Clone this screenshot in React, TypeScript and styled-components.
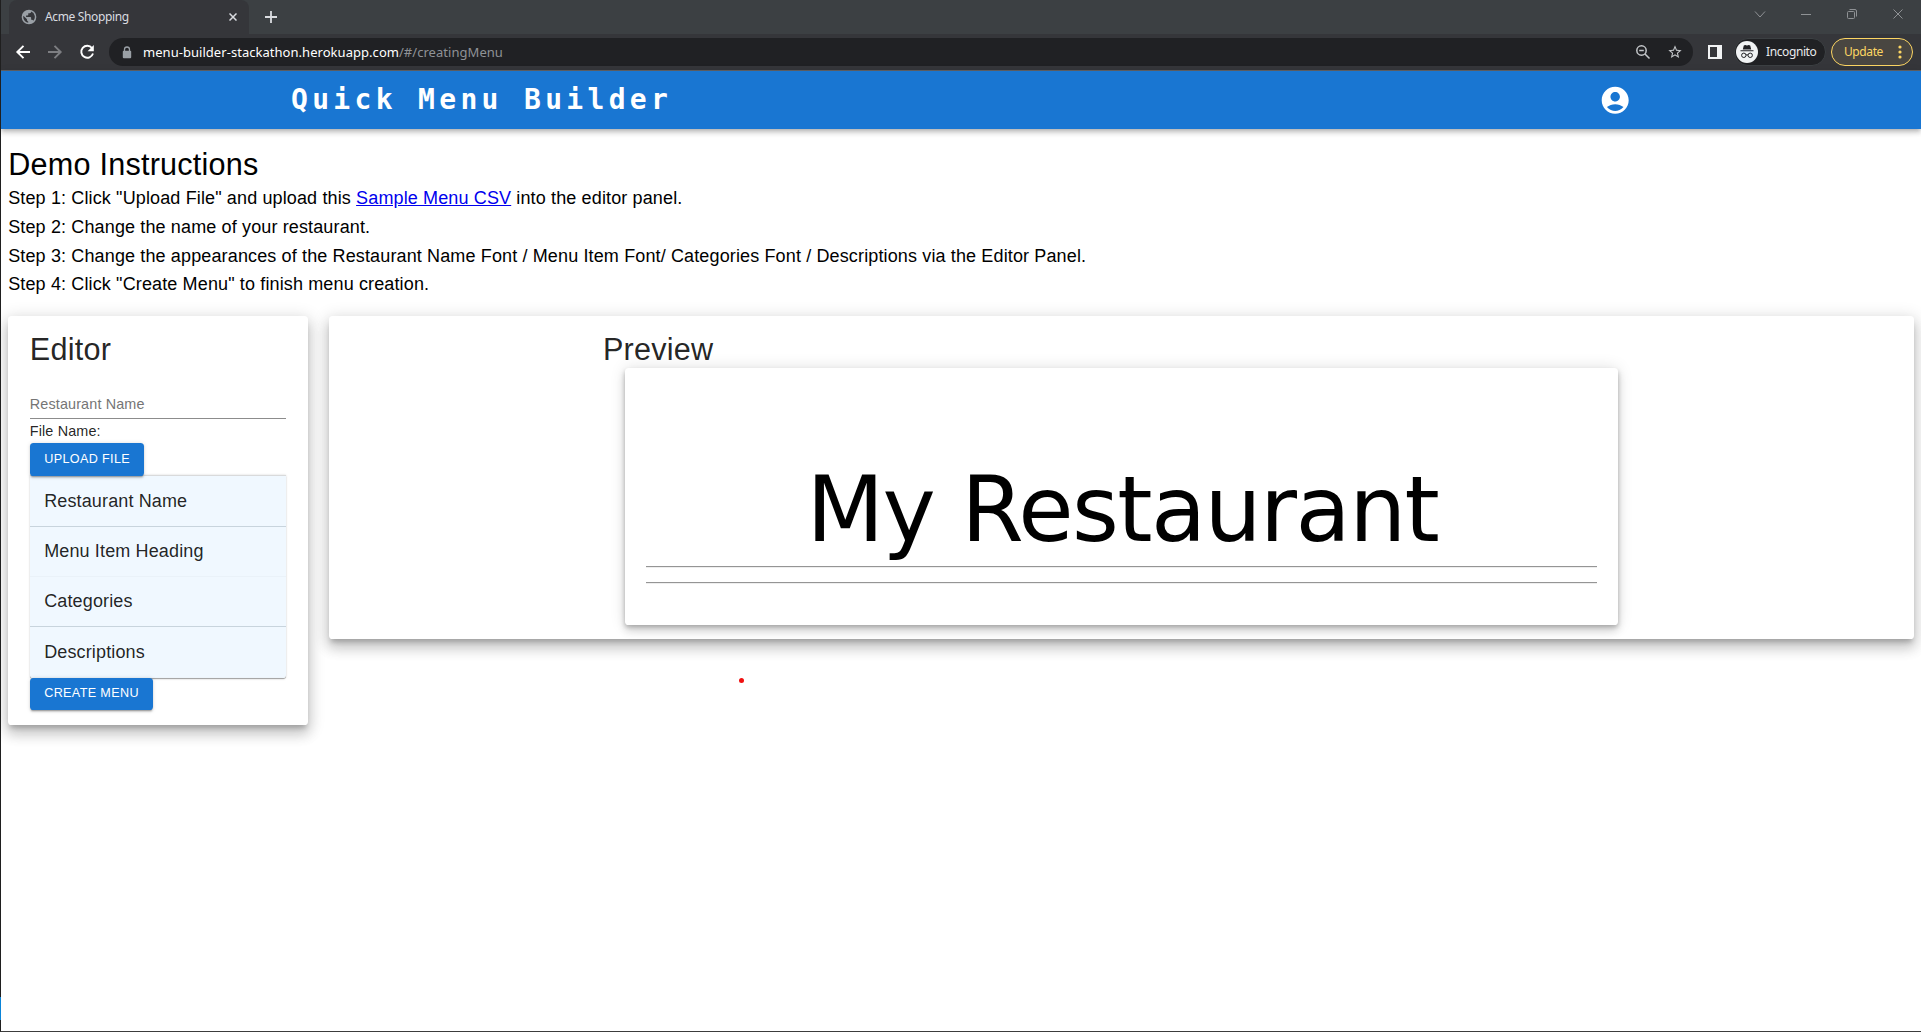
import React from "react";
import styled, { createGlobalStyle, css } from "styled-components";

const Global = createGlobalStyle`
  html, body { margin: 0; padding: 0; background: #fff; }
  * { box-sizing: border-box; }
`;

const ui = `"Noto Sans", "Open Sans", sans-serif`;
const arial = `"Liberation Sans", Arial, sans-serif`;

const Window = styled.div`
  display: flex;
  flex-direction: column;
  width: 1921px;
  height: 1032px;
  overflow: hidden;
  border-left: 1px solid #1f1f1f;
  border-bottom: 1px solid #3c3c3c;
  background: #fff;
`;

const TabStrip = styled.div`
  display: flex;
  flex: none;
  height: 34px;
  padding-left: 8px;
  background: #3c4043;
`;

const Tab = styled.div`
  display: flex;
  align-items: center;
  width: 240px;
  height: 34px;
  padding: 0 12px 0 12px;
  border-radius: 8px 8px 0 0;
  background: #35363a;
  color: #dadce0;
`;

const TabTitle = styled.span`
  flex: 1;
  margin-left: 8px;
  font: 12px/16px ${ui};
  letter-spacing: -0.36px;
`;

const NewTab = styled.div`
  display: flex;
  align-items: center;
  margin-left: 16px;
  color: #dadce0;
`;

const WindowControls = styled.div`
  display: flex;
  height: 28px;
  margin-left: auto;
  color: #8f9295;
`;

const ControlCell = styled.div`
  display: flex;
  align-items: center;
  justify-content: center;
  width: 46px;
`;

const Toolbar = styled.div`
  display: flex;
  flex: none;
  align-items: center;
  height: 37px;
  padding: 0 8px 0 12px;
  border-bottom: 1px solid #5f6064;
  background: #35363a;
`;

const NavButtons = styled.div`
  display: flex;
  gap: 12px;
  margin-right: 12px;
`;

const AddressBar = styled.div`
  display: flex;
  flex: 1;
  align-items: center;
  height: 28px;
  padding: 0 10px 0 13px;
  border-radius: 14px;
  background: #202124;
  color: #c4c7ca;
`;

const Url = styled.span`
  flex: 1;
  margin-left: 11px;
  color: #8f9296;
  font: 13px/18px ${ui};
  letter-spacing: 0.04px;
`;

const Host = styled.span`
  color: #fff;
`;

const BarIcons = styled.div`
  display: flex;
  gap: 16px;
`;

const SidePanelButton = styled.div`
  display: flex;
  margin: 0 12px 0 15px;
`;

const IncognitoChip = styled.div`
  display: flex;
  align-items: center;
  gap: 8px;
  width: 92px;
  height: 28px;
  padding-left: 1px;
  border: 1px solid #3c4043;
  border-radius: 14px;
  background: #202124;
  color: #e8eaed;
  font: 12px/16px ${ui};
  letter-spacing: -0.4px;
`;

const UpdateChip = styled.div`
  display: flex;
  align-items: center;
  justify-content: space-between;
  width: 82px;
  height: 28px;
  margin-left: 5px;
  padding: 0 10px 0 12px;
  border: 1px solid #fdd663;
  border-radius: 14px;
  background: #494641;
  color: #fdd663;
  font: 12px/16px ${ui};
  letter-spacing: -0.4px;
`;

const AppBar = styled.header`
  position: relative;
  display: flex;
  flex: none;
  align-items: center;
  justify-content: space-between;
  height: 57.6px;
  padding: 0 289.8px 0 290px;
  background: #1976d2;
  color: #fff;
  box-shadow: 0 1.8px 3.6px -0.9px rgba(0, 0, 0, 0.2), 0 3.6px 4.5px rgba(0, 0, 0, 0.14),
    0 0.9px 9px rgba(0, 0, 0, 0.12);
`;

const Brand = styled.span`
  font: 700 28px/38px "DejaVu Sans Mono", monospace;
  letter-spacing: 4.32px;
`;

const Page = styled.main`
  flex: 1;
  padding: 17.6px 7.2px 0;
`;

const h4 = css`
  margin: 0;
  font: 400 30.6px/37.8px ${arial};
  letter-spacing: 0.225px;
`;

const h6 = css`
  margin: 0;
  font: 400 18px/28.8px ${arial};
  letter-spacing: 0.135px;
`;

const InstructionsTitle = styled.h4`
  ${h4}
  color: #000;
`;

const Step = styled.p`
  ${h6}
  color: #000;
`;

const CsvLink = styled.a`
  color: #0000ee;
  text-decoration: underline;
`;

const Panels = styled.div`
  display: flex;
  align-items: flex-start;
  gap: 21.2px;
  margin-top: 16.4px;
`;

const Card = styled.section`
  padding: 14.4px 21.6px;
  border-radius: 3.6px;
  background: #fff;
  color: rgba(0, 0, 0, 0.87);
  box-shadow: 0 5.4px 5.4px -2.7px rgba(0, 0, 0, 0.2), 0 9px 12.6px 0.9px rgba(0, 0, 0, 0.14),
    0 3.6px 16.2px 2.7px rgba(0, 0, 0, 0.12);
`;

const EditorCard = styled(Card)`
  width: 299.6px;
  height: 409px;
`;

const PreviewCard = styled(Card)`
  flex: 1;
  height: 323px;
`;

const CardTitle = styled.h4`
  ${h4}
  height: 37.8px;
  padding-top: 1px;
`;

const NameInput = styled.input`
  display: block;
  width: 100%;
  height: 31px;
  margin-top: 19.8px;
  padding: 2px 0 0;
  border: 0;
  border-bottom: 1px solid #8c8c8c;
  background: none;
  font: 14.4px/20.7px ${arial};
  letter-spacing: 0.135px;
  &::placeholder {
    color: #757575;
    opacity: 1;
  }
`;

const FileName = styled.p`
  margin: 2.8px 0 0.4px;
  font: 14.4px/21.6px ${arial};
  letter-spacing: 0.135px;
`;

const Button = styled.button`
  position: relative;
  z-index: 1;
  display: block;
  height: 32.85px;
  padding: 0 14.4px 1px;
  border: 0;
  border-radius: 3.6px;
  background: #1976d2;
  color: #fff;
  font: 500 12.6px/22px ${arial};
  letter-spacing: 0.36px;
  text-transform: uppercase;
  box-shadow: 0 2.7px 0.9px -1.8px rgba(0, 0, 0, 0.2), 0 1.8px 1.8px rgba(0, 0, 0, 0.14),
    0 0.9px 4.5px rgba(0, 0, 0, 0.12);
`;

const AccordionList = styled.div`
  display: flex;
  flex-direction: column;
  height: 202.2px;
  margin-top: -0.8px;
  border-top: 1px solid #d9dadb;
  border-radius: 0 0 3.6px 3.6px;
  box-shadow: 0 1.8px 0.9px -0.9px rgba(0, 0, 0, 0.2), 0 0.9px 0.9px rgba(0, 0, 0, 0.14),
    0 0.9px 2.7px rgba(0, 0, 0, 0.12);
`;

const AccordionItem = styled.div<{ $line: string }>`
  ${h6}
  display: flex;
  flex: 1;
  align-items: center;
  padding: 0 14.4px;
  border-bottom: 1px solid ${(p) => p.$line};
  background: #f0f8ff;
  &:last-child {
    border-radius: 0 0 3.6px 3.6px;
  }
`;

const PreviewBody = styled.div`
  width: 1036.8px;
  margin: 0 auto;
`;

const MenuSheet = styled.div`
  height: 257px;
  margin: 0 21.6px;
  padding: 89.4px 21.6px 0;
  border-radius: 3.6px;
  background: #fff;
  box-shadow: 0 2.7px 4.5px -0.9px rgba(0, 0, 0, 0.2), 0 5.4px 9px rgba(0, 0, 0, 0.14),
    0 0.9px 16.2px rgba(0, 0, 0, 0.12);
`;

const RestaurantName = styled.h1`
  margin: 0;
  padding-left: 2px;
  color: #000;
  font: 400 90px/105px Verdana, "DejaVu Sans", sans-serif;
  letter-spacing: -1.56px;
  text-align: center;
  white-space: nowrap;
`;

const Rule = styled.hr<{ $top: number }>`
  height: 2px;
  margin: ${(p) => p.$top}px 0 0;
  border: 0;
  border-top: 1px solid #959595;
  border-bottom: 1px solid #eee;
`;

const CursorDot = styled.div`
  position: absolute;
  left: 739px;
  top: 678px;
  width: 5px;
  height: 5px;
  border-radius: 50%;
  background: #f01010;
`;

const LeftAccent = styled.div`
  position: absolute;
  left: 0;
  top: 997px;
  width: 1px;
  height: 23px;
  background: #0a84d8;
`;

const Globe = () => (
  <svg width="16" height="16" viewBox="0 0 24 24" fill="#9aa0a6">
    <path d="M12 1a11 11 0 1 0 0 22 11 11 0 0 0 0-22zM10.800 20.500A8.700 8.700 0 0 1 3.600 10l5.400 5.300v1.100c0 1.200 1 2.200 1.800 2.200zm7.600-2.700c-.3-.9-1.100-1.500-2.100-1.500h-1.100v-3.300c0-.6-.5-1.100-1.100-1.100H7.600V9.700h2.200c.6 0 1.100-.5 1.100-1.100V6.400h2.200c1.200 0 2.200-1 2.200-2.200v-.4a8.700 8.700 0 0 1 3.100 14z" />
  </svg>
);

const Cross = ({ size = 8, w = 1.5 }: { size?: number; w?: number }) => (
  <svg width={size} height={size} viewBox={`0 0 ${size} ${size}`} stroke="currentColor" strokeWidth={w}>
    <path d={`M.5 .5L${size - 0.5} ${size - 0.5}M${size - 0.5} .5L.5 ${size - 0.5}`} />
  </svg>
);

const Arrow = ({ color, flip }: { color: string; flip?: boolean }) => (
  <svg width="20" height="20" viewBox="0 0 20 20" fill="none" stroke={color} strokeWidth="1.9">
    <path d={flip ? "M3 10h12.500M9.500 3.800l6.200 6.200-6.200 6.200" : "M17 10H4.500M10.500 3.800L4.300 10l6.200 6.200"} />
  </svg>
);

const Reload = () => (
  <svg width="20" height="20" viewBox="0 0 20 20">
    <path d="M15 6A6 6 0 1 0 16 11.500" fill="none" stroke="#fff" strokeWidth="1.9" />
    <path d="M16.800 3V9.200H10.600z" fill="#fff" />
  </svg>
);

const Lock = () => (
  <svg width="10" height="13" viewBox="0 0 10 13">
    <path d="M2.500 6V3.500a2.500 2.500 0 0 1 5 0V6" fill="none" stroke="#9aa0a6" strokeWidth="1.300" />
    <rect x="0.800" y="4.800" width="8.400" height="7.400" rx="1" fill="#9aa0a6" />
  </svg>
);

const ZoomOut = () => (
  <svg width="16" height="16" viewBox="0 0 16 16" fill="none" stroke="currentColor" strokeWidth="1.500">
    <circle cx="6.500" cy="6.500" r="4.700" />
    <path d="M10 10l4.500 4.500M4.200 6.500h4.600" />
  </svg>
);

const Star = () => (
  <svg width="16" height="16" viewBox="0 0 24 24" fill="currentColor">
    <path d="M22 9.240l-7.190-.62L12 2 9.190 8.630 2 9.240l5.460 4.730L5.820 21 12 17.270 18.180 21l-1.630-7.030L22 9.240zM12 15.400l-3.760 2.270 1-4.280-3.320-2.880 4.380-.38L12 6.100l1.710 4.040 4.380.38-3.320 2.880 1 4.280L12 15.400z" />
  </svg>
);

const SidePanel = () => (
  <svg width="14" height="14" viewBox="0 0 14 14">
    <path d="M0 0h14v14H0zM2 2v10h7V2z" fill="#f1f3f4" fillRule="evenodd" />
  </svg>
);

const Incognito = () => (
  <svg width="22" height="22" viewBox="0 0 22 22">
    <circle cx="11" cy="11" r="11" fill="#f1f3f4" />
    <path d="M7.800 4.500l1.400-.5 1.800.5 1.800-.5 1.400.5 1 4H6.800zM4.500 9.200h13v1.100h-13z" fill="#202124" />
    <g fill="none" stroke="#202124" strokeWidth="1">
      <circle cx="7.800" cy="14.300" r="2.200" />
      <circle cx="14.200" cy="14.300" r="2.200" />
      <path d="M10 14.100q1-.8 2 0" />
    </g>
  </svg>
);

const Dots = () => (
  <svg width="4" height="14" viewBox="0 0 4 14" fill="currentColor">
    <circle cx="2" cy="2" r="1.600" />
    <circle cx="2" cy="7" r="1.600" />
    <circle cx="2" cy="12" r="1.600" />
  </svg>
);

const Account = () => (
  <svg width="32.400" height="32.400" viewBox="0 0 24 24" fill="#fff">
    <path d="M12 2C6.480 2 2 6.480 2 12s4.480 10 10 10 10-4.480 10-10S17.520 2 12 2zm0 4c1.930 0 3.500 1.570 3.500 3.500S13.930 13 12 13s-3.500-1.570-3.500-3.500S10.070 6 12 6zm0 14c-2.030 0-4.430-.82-6.140-2.880C7.550 15.800 9.680 15 12 15s4.450.8 6.140 2.120C16.430 19.180 14.030 20 12 20z" />
  </svg>
);

const sections = [
  { label: "Restaurant Name", line: "#c8d4dd" },
  { label: "Menu Item Heading", line: "#eaf2f9" },
  { label: "Categories", line: "#c8d4dd" },
  { label: "Descriptions", line: "#eef5fb" },
];

export default function App() {
  return (
    <Window>
      <Global />
      <TabStrip>
        <Tab>
          <Globe />
          <TabTitle>Acme Shopping</TabTitle>
          <Cross />
        </Tab>
        <NewTab>
          <svg width="12" height="12" viewBox="0 0 12 12" stroke="currentColor" strokeWidth="1.800">
            <path d="M6 0v12M0 6h12" />
          </svg>
        </NewTab>
        <WindowControls>
          <ControlCell>
            <svg width="12" height="7" viewBox="0 0 12 7" fill="none" stroke="currentColor">
              <path d="M1 .5l5 5.500 5-5.500" />
            </svg>
          </ControlCell>
          <ControlCell>
            <svg width="10" height="1" viewBox="0 0 10 1">
              <path d="M0 0h10v1H0z" fill="currentColor" />
            </svg>
          </ControlCell>
          <ControlCell>
            <svg width="10" height="10" viewBox="0 0 10 10" fill="none" stroke="currentColor">
              <rect x="0.500" y="2.500" width="7" height="7" rx="1" />
              <path d="M2.500 .5h5.500q1.500 0 1.500 1.500v5.500" />
            </svg>
          </ControlCell>
          <ControlCell>
            <Cross size={10} w={1} />
          </ControlCell>
        </WindowControls>
      </TabStrip>
      <Toolbar>
        <NavButtons>
          <Arrow color="#fff" />
          <Arrow color="#7d7e82" flip />
          <Reload />
        </NavButtons>
        <AddressBar>
          <Lock />
          <Url>
            <Host>menu-builder-stackathon.herokuapp.com</Host>/#/creatingMenu
          </Url>
          <BarIcons>
            <ZoomOut />
            <Star />
          </BarIcons>
        </AddressBar>
        <SidePanelButton>
          <SidePanel />
        </SidePanelButton>
        <IncognitoChip>
          <Incognito />
          Incognito
        </IncognitoChip>
        <UpdateChip>
          Update
          <Dots />
        </UpdateChip>
      </Toolbar>
      <AppBar>
        <Brand>Quick Menu Builder</Brand>
        <Account />
      </AppBar>
      <Page>
        <InstructionsTitle>Demo Instructions</InstructionsTitle>
        <Step>
          Step 1: Click "Upload File" and upload this <CsvLink>Sample Menu CSV</CsvLink> into the editor panel.
        </Step>
        <Step>Step 2: Change the name of your restaurant.</Step>
        <Step>
          Step 3: Change the appearances of the Restaurant Name Font / Menu Item Font/ Categories Font / Descriptions
          via the Editor Panel.
        </Step>
        <Step>Step 4: Click "Create Menu" to finish menu creation.</Step>
        <Panels>
          <EditorCard>
            <CardTitle>Editor</CardTitle>
            <NameInput placeholder="Restaurant Name" />
            <FileName>File Name:</FileName>
            <Button>Upload File</Button>
            <AccordionList>
              {sections.map((s) => (
                <AccordionItem key={s.label} $line={s.line}>
                  {s.label}
                </AccordionItem>
              ))}
            </AccordionList>
            <Button>Create Menu</Button>
          </EditorCard>
          <PreviewCard>
            <PreviewBody>
              <CardTitle>Preview</CardTitle>
              <MenuSheet>
                <RestaurantName>My Restaurant</RestaurantName>
                <Rule $top={3.4} />
                <Rule $top={14} />
              </MenuSheet>
            </PreviewBody>
          </PreviewCard>
        </Panels>
      </Page>
      <CursorDot />
      <LeftAccent />
    </Window>
  );
}
